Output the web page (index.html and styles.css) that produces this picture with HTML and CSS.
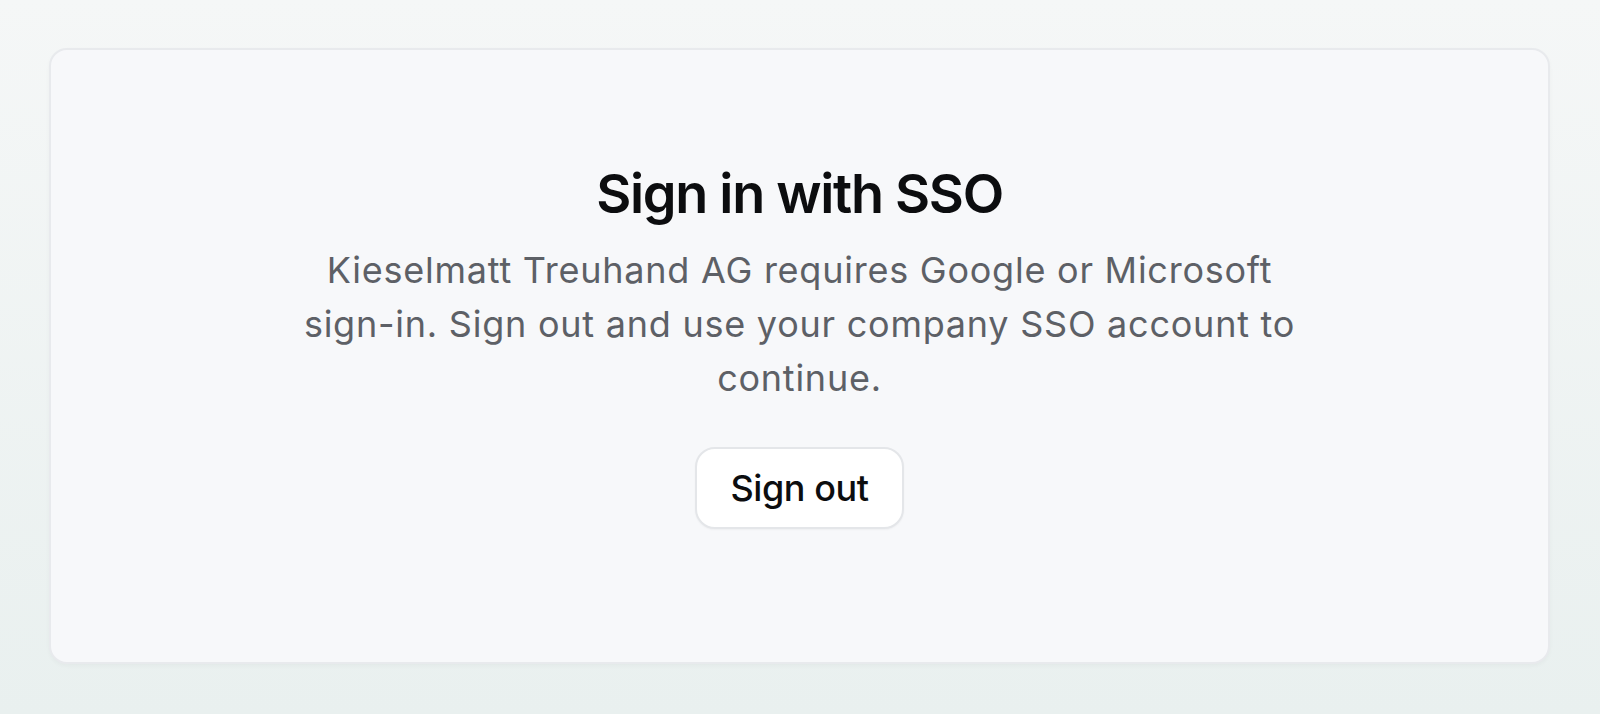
FILE: index.html
```html
<!DOCTYPE html>
<html lang="en">
<head>
    <meta charset="UTF-8">
    <meta name="viewport" content="width=device-width, initial-scale=1.0">
    <title>Sign in with SSO</title>
    <link rel="stylesheet" href="styles.css">
</head>
<body>
    <main class="card">
        <h1 class="title">Sign in with SSO</h1>
        <p class="message">Kieselmatt Treuhand AG requires Google or Microsoft <span class="nowrap">sign-in</span>. Sign out and use your company SSO account to continue.</p>
        <button class="button" type="button">Sign out</button>
    </main>
</body>
</html>
```

FILE: styles.css
```css
html, body {
    height: 100%;
}
body {
    margin: 0;
    padding: 48px 50px 50px 49px;
    box-sizing: border-box;
    display: flex;
    font-family: Inter, "Noto Sans", sans-serif;
    background: linear-gradient(to bottom, #f5f7f7, #e9f0ef);
}
.card {
    flex: 1;
    display: flex;
    flex-direction: column;
    align-items: center;
    padding: 108px 48px 0;
    background-color: #f7f8fa;
    border: 2px solid #e8eaed;
    border-radius: 18px;
    box-shadow: 0 2px 4px rgba(0, 0, 0, 0.03);
    text-align: center;
}
.title {
    margin: 0;
    font-size: 54px;
    line-height: 72px;
    font-weight: 600;
    color: #0c0d0f;
    letter-spacing: -1.3px;
}
.message {
    margin: 13px 0 0;
    max-width: 1008px;
    font-size: 36px;
    line-height: 54px;
    color: #5d6066;
    letter-spacing: 0.76px;
}
.nowrap {
    white-space: nowrap;
}
.button {
    margin-top: 42px;
    height: 82px;
    padding: 0 33px;
    font-family: inherit;
    font-size: 36px;
    font-weight: 500;
    letter-spacing: -0.44px;
    color: #0c0d0f;
    background-color: #ffffff;
    border: 2px solid #e4e6e9;
    border-radius: 20px;
    box-shadow: 0 1px 2px rgba(0, 0, 0, 0.04);
    cursor: pointer;
}
```
